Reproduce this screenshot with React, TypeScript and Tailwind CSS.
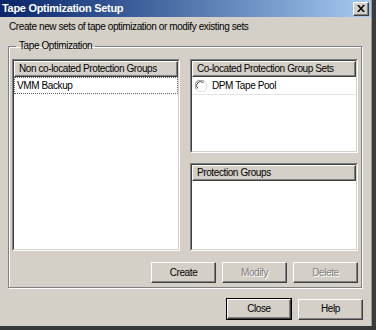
import React from "react";

const FONT = "font-['Liberation_Sans',Arial,sans-serif]";

function Sunken({ className, children }: { className: string; children?: React.ReactNode }) {
  return (
    <div
      className={`border border-t-[#808080] border-l-[#808080] border-b-white border-r-white ${className}`}
    >
      <div className="h-full border border-t-[#404040] border-l-[#404040] border-b-[#d4d0c8] border-r-[#d4d0c8] bg-white flex flex-col overflow-hidden">
        {children}
      </div>
    </div>
  );
}

function Header({ children }: { children: React.ReactNode }) {
  return (
    <div className="h-[16px] shrink-0 bg-[#d4d0c8] border border-t-white border-l-white border-b-[#404040] border-r-[#404040] shadow-[inset_-1px_-1px_0_#808080] flex items-center pl-[4px] leading-none whitespace-nowrap">
      {children}
    </div>
  );
}

function Btn({
  children,
  disabled,
  className,
}: {
  children: React.ReactNode;
  disabled?: boolean;
  className: string;
}) {
  return (
    <div
      className={`border border-t-white border-l-white border-b-[#404040] border-r-[#404040] shadow-[inset_-1px_-1px_0_#808080] flex items-center justify-center leading-none ${
        disabled ? "text-[#808080] [text-shadow:1px_1px_0_#fff]" : "text-black"
      } ${className}`}
    >
      {children}
    </div>
  );
}

function Radio() {
  return (
    <svg width="12" height="12" viewBox="0 0 12 12" className="shrink-0">
      <circle cx="6" cy="6" r="5.5" fill="#fff" />
      <path d="M1.6 9.4 A5 5 0 0 1 9.4 1.6" stroke="#808080" strokeWidth="1" fill="none" />
      <path d="M2.7 8.3 A3.9 3.9 0 0 1 8.3 2.7" stroke="#404040" strokeWidth="1" fill="none" />
      <path d="M10.4 2.6 A5 5 0 0 1 2.6 10.4" stroke="#d4d0c8" strokeWidth="1" fill="none" />
    </svg>
  );
}

export default function App() {
  return (
    <div
      className={`w-[376px] h-[330px] flex flex-col bg-[#d4d0c8] text-black text-[10px] tracking-[-0.4px] ${FONT}`}
    >
      <div className="flex flex-1 min-h-0">
        <div className="w-[371px] flex flex-col">
          {/* Title bar */}
          <div className="h-[17px] shrink-0 bg-linear-to-r from-[#0a246a] to-[#a6caf0] flex items-center justify-between pl-[2px] pr-[2px]">
            <span className="text-white font-bold text-[11px] tracking-[-0.3px] leading-none">
              Tape Optimization Setup
            </span>
            <div className="w-[16px] h-[14px] bg-[#d4d0c8] border border-t-white border-l-white border-b-[#404040] border-r-[#404040] shadow-[inset_-1px_-1px_0_#808080] flex items-center justify-center">
              <svg width="8" height="7" viewBox="0 0 8 7">
                <path d="M0 0h2l2 2.4L6 0h2L5 3.5 8 7H6L4 4.6 2 7H0l3-3.5z" fill="#000" />
              </svg>
            </div>
          </div>

          {/* Subtitle */}
          <div className="mt-[4px] pl-[9px] leading-[12px] whitespace-nowrap">
            Create new sets of tape optimization or modify existing sets
          </div>

          {/* Group box */}
          <fieldset className="ml-[8px] mr-[9px] mt-[7px] p-0 min-w-0 border border-[#808080] shadow-[inset_1px_1px_0_#fff,1px_1px_0_#fff]">
            <legend className="ml-[7px] px-[3px] leading-[12px]">Tape Optimization</legend>
            <div className="pl-[3px] pr-[3px] pt-[7px] pb-[4px] flex flex-col">
              <div className="flex gap-[10px]">
                <Sunken className="w-[168px] h-[192px]">
                  <Header>Non co-located Protection Groups</Header>
                  <div className="h-[17px] border border-dotted border-[#606060] flex items-center pl-[2px] whitespace-nowrap">
                    VMM Backup
                  </div>
                </Sunken>
                <div className="w-[168px] flex flex-col gap-[10px]">
                  <Sunken className="h-[94px]">
                    <Header>Co-located Protection Group Sets</Header>
                    <div className="h-[18px] border-b border-[#e4e4e4] flex items-center pl-[3px] gap-[5px] whitespace-nowrap">
                      <Radio />
                      <span>DPM Tape Pool</span>
                    </div>
                  </Sunken>
                  <Sunken className="h-[88px]">
                    <Header>Protection Groups</Header>
                  </Sunken>
                </div>
              </div>
              <div className="mt-[11px] flex justify-end gap-[6px]">
                <Btn className="w-[65px] h-[21px]">Create</Btn>
                <Btn className="w-[65px] h-[21px]" disabled>
                  Modify
                </Btn>
                <Btn className="w-[65px] h-[21px]" disabled>
                  Delete
                </Btn>
              </div>
            </div>
          </fieldset>

          {/* Bottom buttons */}
          <div className="mt-[10px] mr-[8px] flex justify-end items-center gap-[6px]">
            <div className="w-[66px] h-[22px] border border-black flex">
              <Btn className="flex-1">Close</Btn>
            </div>
            <Btn className="w-[65px] h-[21px]">Help</Btn>
          </div>
        </div>
        <div className="flex-1 border-l border-[#9a9a9a] bg-[#3c3c3c]" />
      </div>
      <div className="h-[4px] bg-[#383838]" />
    </div>
  );
}
